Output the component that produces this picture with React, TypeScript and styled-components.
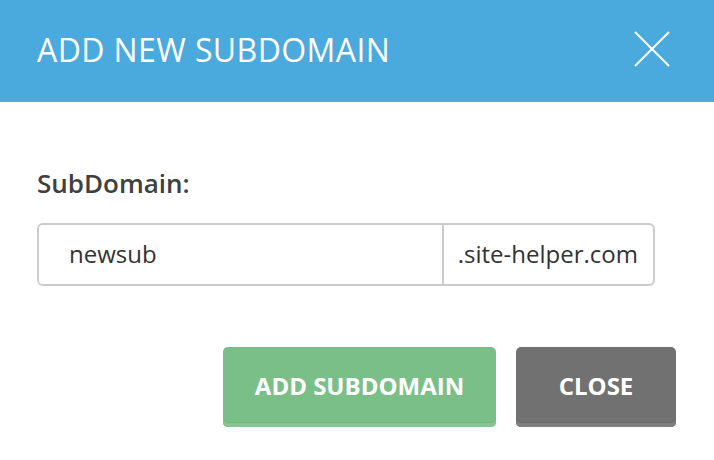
import React, { useState } from "react";
import styled, { createGlobalStyle } from "styled-components";

const GlobalStyle = createGlobalStyle`
  html, body {
    margin: 0;
    padding: 0;
    background: #ffffff;
  }
  body {
    font-family: "Open Sans", "Noto Sans", sans-serif;
    color: #333333;
  }
  * {
    box-sizing: border-box;
  }
`;

const Modal = styled.div`
  width: 714px;
  background: #ffffff;
`;

const ModalHeader = styled.div`
  display: flex;
  align-items: center;
  justify-content: space-between;
  height: 102px;
  padding: 0 44px 4px 37px;
  background: #4aa9dd;
`;

const ModalTitle = styled.h2`
  margin: 0;
  font-size: 32px;
  font-weight: 400;
  color: #ffffff;
  letter-spacing: 0.4px;
`;

const CloseIcon = styled.button`
  display: flex;
  align-items: center;
  justify-content: center;
  width: 36px;
  height: 36px;
  padding: 0;
  border: none;
  background: transparent;
  cursor: pointer;
`;

const ModalBody = styled.div`
  padding: 64px 38px 33px 37px;
`;

const Label = styled.label`
  display: block;
  font-size: 26px;
  font-weight: 600;
  color: #404040;
  line-height: 35px;
`;

const InputGroup = styled.div`
  display: flex;
  align-items: stretch;
  width: 618px;
  height: 63px;
  margin-top: 22px;
  border: 2px solid #cbcbcb;
  border-radius: 6px;
  overflow: hidden;
`;

const TextInput = styled.input`
  flex: 1;
  min-width: 0;
  padding: 0 0 2px 30px;
  border: none;
  outline: none;
  font-family: "Open Sans", "Noto Sans", sans-serif;
  font-size: 24px;
  color: #333333;
  background: #ffffff;
`;

const Suffix = styled.span`
  display: flex;
  align-items: center;
  padding: 0 15px 2px 14px;
  border-left: 2px solid #cbcbcb;
  font-size: 24px;
  color: #333333;
`;

const Actions = styled.div`
  display: flex;
  justify-content: flex-end;
  gap: 20px;
  margin-top: 61px;
`;

const Button = styled.button<{ $variant: "primary" | "secondary"; $width: number }>`
  width: ${({ $width }) => $width}px;
  height: 80px;
  padding: 0 0 4px;
  border: none;
  border-radius: 5px;
  font-family: "Open Sans", "Noto Sans", sans-serif;
  font-size: 24px;
  font-weight: 700;
  color: #ffffff;
  cursor: pointer;
  background: ${({ $variant }) => ($variant === "primary" ? "#7bbf88" : "#717171")};
  box-shadow: inset 0 -4px 0
      ${({ $variant }) => ($variant === "primary" ? "#86c692" : "#7e7e7e")},
    inset 0 -5px 0 ${({ $variant }) => ($variant === "primary" ? "#72b37f" : "#6a6a6a")};
`;

export default function App() {
  const [subdomain, setSubdomain] = useState("newsub");

  return (
    <>
      <GlobalStyle />
      <Modal>
        <ModalHeader>
          <ModalTitle>ADD NEW SUBDOMAIN</ModalTitle>
          <CloseIcon aria-label="Close">
            <svg width="36" height="36" viewBox="0 0 36 36">
              <path d="M1 1 L35 35 M35 1 L1 35" stroke="#ffffff" strokeWidth="2" fill="none" />
            </svg>
          </CloseIcon>
        </ModalHeader>
        <ModalBody>
          <Label htmlFor="subdomain">SubDomain:</Label>
          <InputGroup>
            <TextInput
              id="subdomain"
              value={subdomain}
              onChange={(e) => setSubdomain(e.target.value)}
            />
            <Suffix>.site-helper.com</Suffix>
          </InputGroup>
          <Actions>
            <Button $variant="primary" $width={273}>ADD SUBDOMAIN</Button>
            <Button $variant="secondary" $width={160}>CLOSE</Button>
          </Actions>
        </ModalBody>
      </Modal>
    </>
  );
}
